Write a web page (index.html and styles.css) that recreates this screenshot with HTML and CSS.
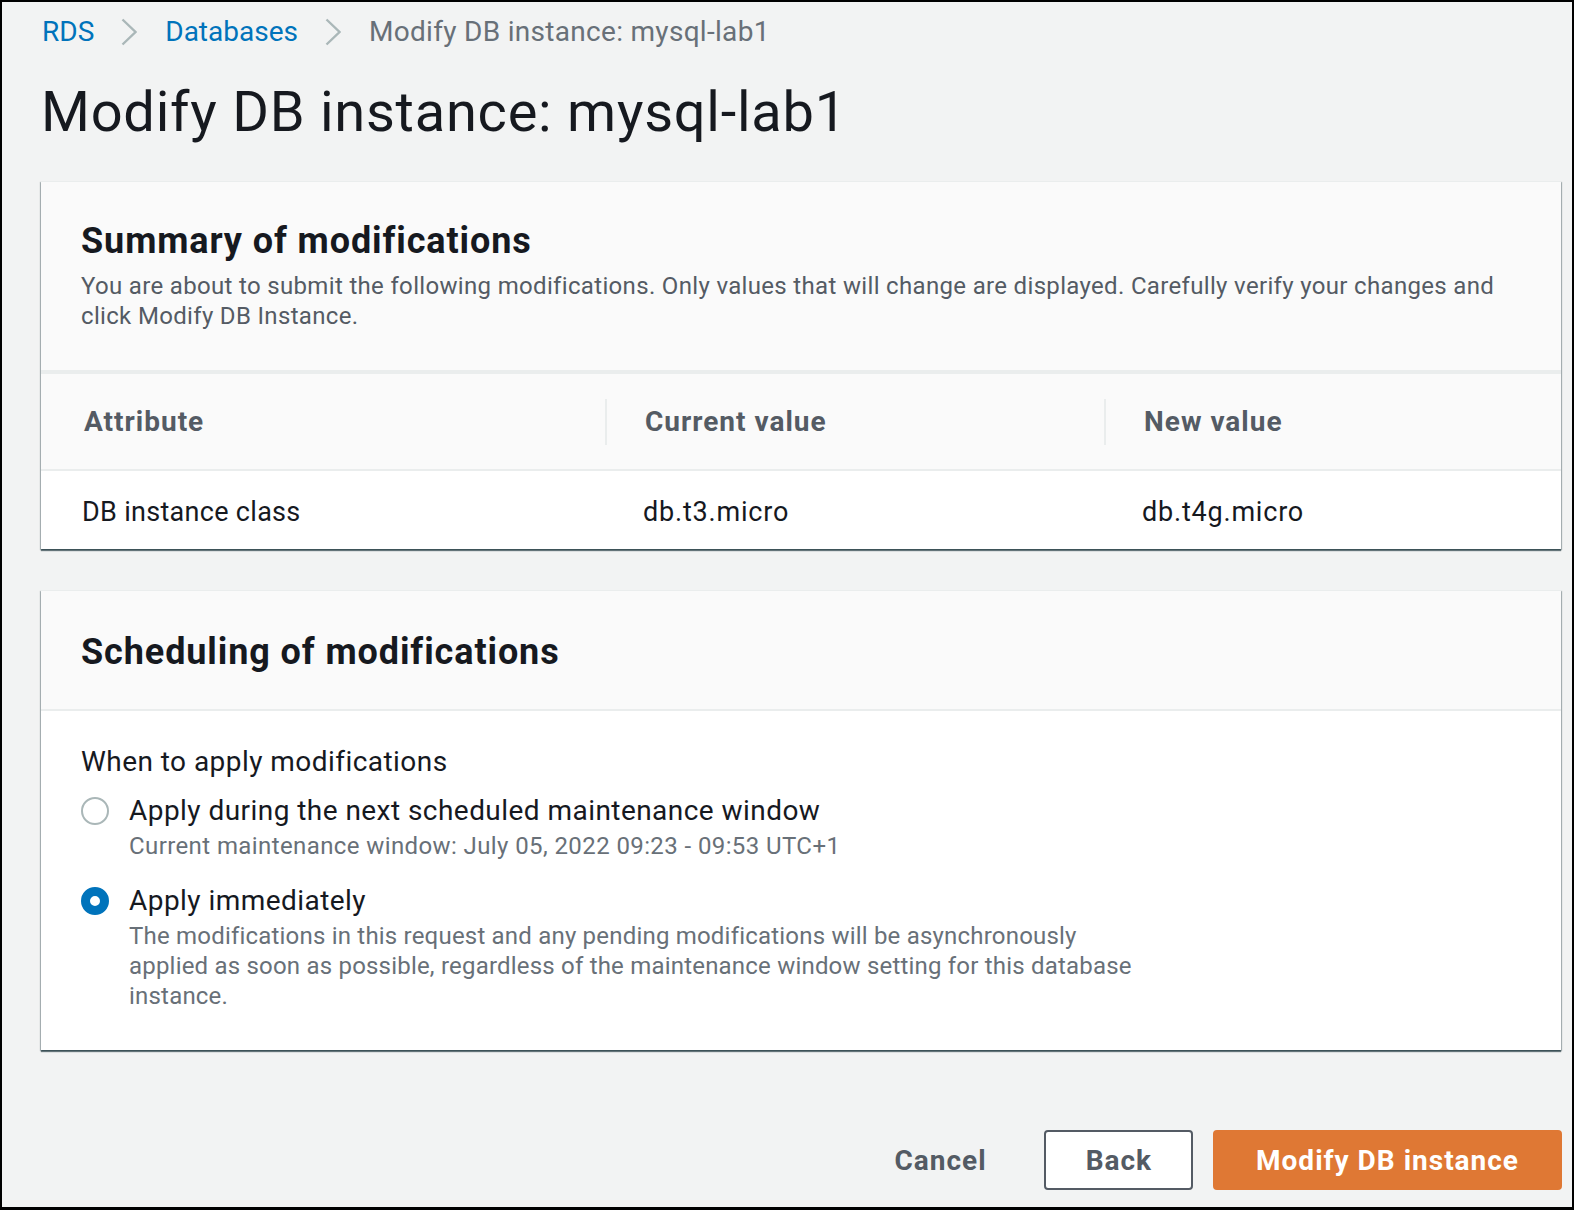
FILE: index.html
```html
<!DOCTYPE html>
<html lang="en">
<head>
<meta charset="utf-8">
<title>Modify DB instance: mysql-lab1</title>
<link rel="stylesheet" href="styles.css">
</head>
<body>
<div class="page">
  <nav class="breadcrumbs">
    <a class="crumb-link" href="#">RDS</a>
    <span class="crumb-sep"><svg width="16" height="28" viewBox="0 0 16 28"><polyline points="1.5,1.5 14.5,14 1.5,26.5" fill="none" stroke="#aab7b8" stroke-width="2.4"/></svg></span>
    <a class="crumb-link" href="#">Databases</a>
    <span class="crumb-sep"><svg width="16" height="28" viewBox="0 0 16 28"><polyline points="1.5,1.5 14.5,14 1.5,26.5" fill="none" stroke="#aab7b8" stroke-width="2.4"/></svg></span>
    <span class="crumb-current">Modify DB instance: mysql-lab1</span>
  </nav>

  <h1 class="title">Modify DB instance: mysql-lab1</h1>

  <section class="card card-summary">
    <div class="card-header header-summary">
      <h2 class="card-title">Summary of modifications</h2>
      <p class="card-desc">You are about to submit the following modifications. Only values that will change are displayed. Carefully verify your changes and click Modify DB Instance.</p>
    </div>
    <table class="mods">
      <thead>
        <tr>
          <th class="col-attr">Attribute</th>
          <th class="col-cur">Current value</th>
          <th class="col-new">New value</th>
        </tr>
      </thead>
      <tbody>
        <tr>
          <td>DB instance class</td>
          <td class="val">db.t3.micro</td>
          <td class="val">db.t4g.micro</td>
        </tr>
      </tbody>
    </table>
  </section>

  <section class="card card-schedule">
    <div class="card-header header-schedule">
      <h2 class="card-title">Scheduling of modifications</h2>
    </div>
    <div class="card-body">
      <div class="field-label">When to apply modifications</div>
      <div class="radio-group">
        <div class="radio-option">
          <span class="radio"></span>
          <div class="radio-text">
            <div class="radio-label">Apply during the next scheduled maintenance window</div>
            <div class="radio-desc desc-window">Current maintenance window: July 05, 2022 09:23 - 09:53 UTC+1</div>
          </div>
        </div>
        <div class="radio-option option-gap">
          <span class="radio checked"></span>
          <div class="radio-text">
            <div class="radio-label">Apply immediately</div>
            <div class="radio-desc desc-wrap">The modifications in this request and any pending modifications will be asynchronously applied as soon as possible, regardless of the maintenance window setting for this database instance.</div>
          </div>
        </div>
      </div>
    </div>
  </section>

  <div class="actions">
    <button class="btn btn-link">Cancel</button>
    <button class="btn btn-normal">Back</button>
    <button class="btn btn-primary">Modify DB instance</button>
  </div>
</div>
</body>
</html>
```

FILE: styles.css
```css
html, body {
  margin: 0;
  padding: 0;
}

body {
  font-family: Roboto, "Liberation Sans", Arial, sans-serif;
  color: #16191f;
}

.page {
  box-sizing: border-box;
  width: 1574px;
  height: 1210px;
  border: 2px solid #000;
  border-bottom-width: 3px;
  background: #f2f3f3;
  padding: 10px 11px 0 39px;
  display: flex;
  flex-direction: column;
}

/* Breadcrumbs */
.breadcrumbs {
  display: flex;
  align-items: center;
  height: 40px;
  font-size: 28px;
  line-height: 40px;
  letter-spacing: 0;
  padding-left: 1px;
}

.crumb-link {
  color: #0073bb;
  text-decoration: none;
}

.crumb-sep {
  display: flex;
  margin: 0 28px 0 27px;
  width: 16px;
  height: 28px;
}

.crumb-current {
  color: #687078;
  letter-spacing: 0.3px;
}

/* Title */
.title {
  margin: 28px 0 0;
  font-size: 56px;
  line-height: 64px;
  font-weight: 400;
  letter-spacing: 0.75px;
  color: #16191f;
}

/* Cards */
.card {
  background: #fff;
  border-top: 1px solid #eaeded;
  box-shadow: 0 2px 1px 0 rgba(0, 28, 36, 0.55),
              1px 1px 1px 0 rgba(0, 28, 36, 0.25),
              -1px 1px 1px 0 rgba(0, 28, 36, 0.25);
}

.card-summary {
  margin-top: 37px;
}

.card-schedule {
  margin-top: 41px;
}

.card-header {
  background: #fafafa;
  padding: 0 40px;
}

.header-summary {
  padding-top: 37px;
  padding-bottom: 39px;
  border-bottom: 4px solid #eaeded;
}

.header-schedule {
  padding-top: 39px;
  padding-bottom: 35px;
  border-bottom: 2px solid #eaeded;
}

.card-title {
  margin: 0;
  font-size: 36px;
  line-height: 44px;
  font-weight: 700;
  letter-spacing: 0.9px;
  color: #16191f;
}

.card-desc {
  margin: 8px 0 0;
  font-size: 24px;
  line-height: 30px;
  color: #545b64;
  letter-spacing: 0.33px;
}

/* Table */
.mods {
  width: 100%;
  border-collapse: collapse;
  table-layout: fixed;
}

.mods th,
.mods td {
  box-sizing: border-box;
}

.col-attr {
  width: 564px;
}

.col-cur {
  width: 499px;
}

.mods th {
  position: relative;
  height: 96px;
  padding: 0 0 0 40px;
  background: #fafafa;
  border-bottom: 2px solid #eaeded;
  text-align: left;
  font-size: 28px;
  font-weight: 700;
  letter-spacing: 1px;
  color: #545b64;
}

.mods th.col-attr {
  padding-left: 43px;
}

.mods th + th::before {
  content: "";
  position: absolute;
  left: 0;
  top: 25px;
  width: 2px;
  height: 46px;
  background: #eaeded;
}

.mods td {
  height: 79px;
  padding: 3px 0 0 38px;
  font-size: 27px;
  letter-spacing: 0.3px;
  color: #16191f;
}

.mods td.val {
  letter-spacing: 0.8px;
}

.mods td:first-child {
  padding-left: 41px;
}

/* Scheduling body */
.card-body {
  padding: 31px 40px 39px;
}

.field-label {
  font-size: 28px;
  line-height: 40px;
  letter-spacing: 0.45px;
  color: #16191f;
}

.radio-group {
  margin-top: 9px;
}

.radio-option {
  display: grid;
  grid-template-columns: 28px 1fr;
  column-gap: 20px;
  align-items: start;
}

.option-gap {
  margin-top: 20px;
}

.radio {
  box-sizing: border-box;
  width: 28px;
  height: 28px;
  margin-top: 6px;
  border-radius: 50%;
  border: 2.5px solid #aab7b8;
  background: #fff;
}

.radio.checked {
  border: 9px solid #0073bb;
}

.radio-label {
  font-size: 28px;
  line-height: 40px;
  letter-spacing: 0.45px;
  color: #16191f;
}

.radio-desc {
  font-size: 24px;
  line-height: 30px;
  letter-spacing: 0.2px;
  color: #687078;
}

.desc-window {
  letter-spacing: 0.4px;
}

.desc-wrap {
  max-width: 1010px;
}

/* Actions */
.actions {
  display: flex;
  justify-content: flex-end;
  gap: 20px;
  margin-top: 80px;
  margin-right: -1px;
}

.btn {
  box-sizing: border-box;
  height: 60px;
  padding: 0 40px;
  border: 2px solid transparent;
  border-radius: 4px;
  font-family: inherit;
  font-size: 28px;
  font-weight: 700;
  letter-spacing: 1px;
  cursor: pointer;
}

.btn-link {
  background: transparent;
  color: #545b64;
  padding-right: 35px;
}

.btn-normal {
  background: #fff;
  border-color: #545b64;
  color: #545b64;
  padding: 0 39px 0 40px;
}

.btn-primary {
  background: #df7834;
  border-color: #df7834;
  color: #fff;
  padding: 0 41px;
}
```
